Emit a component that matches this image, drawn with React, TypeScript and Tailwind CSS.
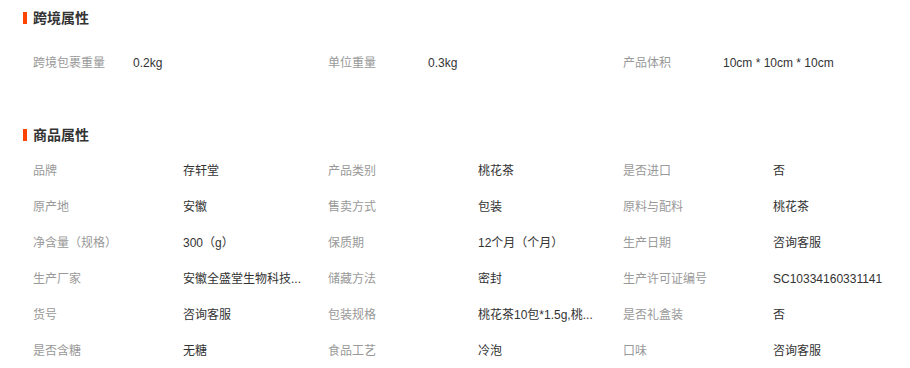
import React from "react";

const font = { fontFamily: '"Liberation Sans", "Noto Sans CJK SC", sans-serif' };

const cross = [
  ["跨境包裹重量", "0.2kg"],
  ["单位重量", "0.3kg"],
  ["产品体积", "10cm * 10cm * 10cm"],
];

// long values are shown already cut, as on the page
const props = [
  ["品牌", "存轩堂"],
  ["产品类别", "桃花茶"],
  ["是否进口", "否"],
  ["原产地", "安徽"],
  ["售卖方式", "包装"],
  ["原料与配料", "桃花茶"],
  ["净含量（规格）", "300（g）"],
  ["保质期", "12个月（个月）"],
  ["生产日期", "咨询客服"],
  ["生产厂家", "安徽全盛堂生物科技..."],
  ["储藏方法", "密封"],
  ["生产许可证编号", "SC10334160331141"],
  ["货号", "咨询客服"],
  ["包装规格", "桃花茶10包*1.5g,桃..."],
  ["是否礼盒装", "否"],
  ["是否含糖", "无糖"],
  ["食品工艺", "冷泡"],
  ["口味", "咨询客服"],
];

function Title({ text }: { text: string }) {
  return (
    <div className="flex items-center h-5 pl-[23px]">
      <span className="w-1 h-3 bg-[#ff4400] mr-[6px]" />
      <span className="text-[14px] font-bold text-[#333]">{text}</span>
    </div>
  );
}

export default function App() {
  return (
    <div className="w-[910px] h-[368px] bg-white overflow-hidden pt-2 text-[12px]" style={font}>
      {/* cross border */}
      <Title text="跨境属性" />
      <div className="mt-[17px] pl-[33px] grid grid-cols-[295px_295px_295px]">
        {cross.map(([k, v]) => (
          <div key={k} className="flex h-9 items-center">
            <span className="w-[100px] text-[#999]">{k}</span>
            <span className="text-[#333]">{v}</span>
          </div>
        ))}
      </div>

      {/* product */}
      <div className="mt-11">
        <Title text="商品属性" />
      </div>
      <div className="mt-2 pl-[33px] grid grid-cols-[295px_295px_295px]">
        {props.map(([k, v]) => (
          <div key={k} className="flex h-9 items-center">
            <span className="w-[150px] shrink-0 text-[#999]">{k}</span>
            <span className="whitespace-nowrap text-[#333]">{v}</span>
          </div>
        ))}
      </div>
    </div>
  );
}
